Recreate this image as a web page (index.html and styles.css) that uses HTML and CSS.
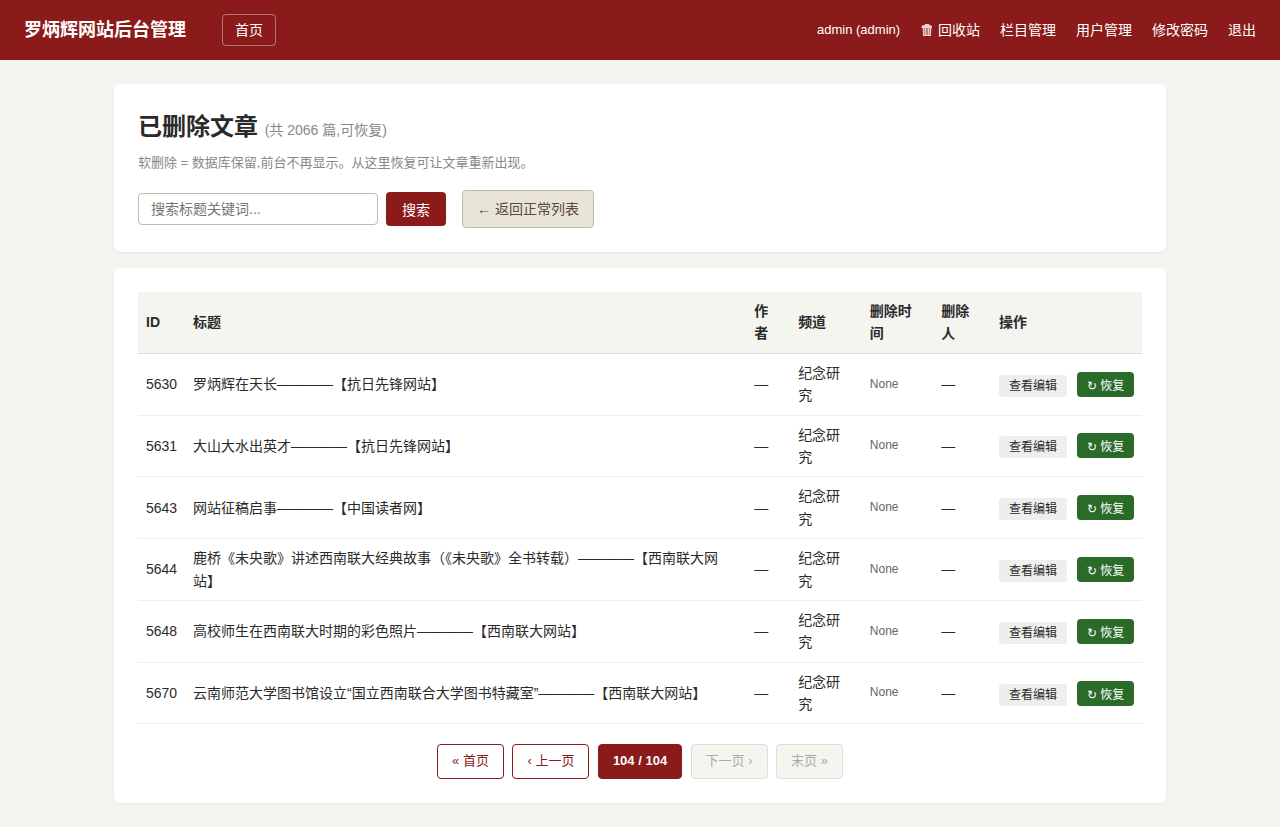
FILE: index.html
```html
<!DOCTYPE html>
<html lang="zh-CN">
<head>
<meta charset="utf-8">
<title>已删除文章</title>
<link rel="stylesheet" href="styles.css">
</head>
<body>
<header class="topbar">
  <div class="brand">罗炳辉网站后台管理</div>
  <a class="home">首页</a>
  <nav class="nav">
    <span class="user">admin (admin)</span>
    <a><svg class="trash" viewBox="0 0 14 14"><path d="M5 2V1h4v1h1.500l1.500 1.500V5H1.500V3.500L3 2z" fill="currentColor" opacity=".8"/><path d="M2.500 5h9L11 13H3z" fill="currentColor" opacity=".45"/><path d="M3.500 5v8M5.500 5v8M8.500 5v8M10.500 5v8M3 12.500h8" fill="none" stroke="currentColor" opacity=".6"/></svg> 回收站</a>
    <a>栏目管理</a>
    <a>用户管理</a>
    <a>修改密码</a>
    <a>退出</a>
  </nav>
</header>
<main class="container">
  <section class="card">
    <h1 class="title">已删除文章 <span class="count">(共 2066 篇,可恢复)</span></h1>
    <p class="hint">软删除 = 数据库保留,前台不再显示。从这里恢复可让文章重新出现。</p>
    <form class="search">
      <input class="field" type="text" placeholder="搜索标题关键词...">
      <button class="submit" type="button">搜索</button>
      <a class="back">← 返回正常列表</a>
    </form>
  </section>
  <section class="card">
    <table class="list">
      <colgroup>
        <col class="c-id"><col class="c-title"><col class="c-author"><col class="c-channel"><col class="c-time"><col class="c-by"><col class="c-ops">
      </colgroup>
      <thead>
        <tr><th>ID</th><th>标题</th><th class="narrow">作者</th><th>频道</th><th>删除时间</th><th class="narrow">删除人</th><th>操作</th></tr>
      </thead>
      <tbody>
        <tr><td>5630</td><td>罗炳辉在天长————【抗日先锋网站】</td><td>—</td><td class="narrow">纪念研究</td><td class="time">None</td><td>—</td><td class="ops"><a class="view">查看编辑</a> <button class="restore">↻ 恢复</button></td></tr>
        <tr><td>5631</td><td>大山大水出英才————【抗日先锋网站】</td><td>—</td><td class="narrow">纪念研究</td><td class="time">None</td><td>—</td><td class="ops"><a class="view">查看编辑</a> <button class="restore">↻ 恢复</button></td></tr>
        <tr><td>5643</td><td>网站征稿启事————【中国读者网】</td><td>—</td><td class="narrow">纪念研究</td><td class="time">None</td><td>—</td><td class="ops"><a class="view">查看编辑</a> <button class="restore">↻ 恢复</button></td></tr>
        <tr><td>5644</td><td>鹿桥《未央歌》讲述西南联大经典故事（《未央歌》全书转载）————【西南联大网站】</td><td>—</td><td class="narrow">纪念研究</td><td class="time">None</td><td>—</td><td class="ops"><a class="view">查看编辑</a> <button class="restore">↻ 恢复</button></td></tr>
        <tr><td>5648</td><td>高校师生在西南联大时期的彩色照片————【西南联大网站】</td><td>—</td><td class="narrow">纪念研究</td><td class="time">None</td><td>—</td><td class="ops"><a class="view">查看编辑</a> <button class="restore">↻ 恢复</button></td></tr>
        <tr><td>5670</td><td>云南师范大学图书馆设立“国立西南联合大学图书特藏室”————【西南联大网站】</td><td>—</td><td class="narrow">纪念研究</td><td class="time">None</td><td>—</td><td class="ops"><a class="view">查看编辑</a> <button class="restore">↻ 恢复</button></td></tr>
      </tbody>
    </table>
    <div class="pager">
      <a class="page">« 首页</a>
      <a class="page">‹ 上一页</a>
      <span class="page current">104 / 104</span>
      <span class="page disabled">下一页 ›</span>
      <span class="page disabled">末页 »</span>
    </div>
  </section>
</main>
</body>
</html>
```
FILE: styles.css
```css
* { box-sizing: border-box; }
body {
  margin: 0;
  background: #f5f5f0;
  color: #2a2a2a;
  font-family: "Liberation Sans", "Noto Sans CJK SC", sans-serif;
  font-size: 14px;
  line-height: 1.6;
}
.topbar {
  display: flex;
  align-items: center;
  height: 60px;
  padding: 0 24px;
  background: #8b1a1a;
  color: #fff;
}
.brand { font-size: 18px; font-weight: 700; }
.home {
  margin-left: 36px;
  padding: 4px 12px;
  border: 1px solid rgba(255, 255, 255, .4);
  border-radius: 4px;
}
.nav { display: flex; align-items: center; gap: 20px; margin-left: auto; }
.user { font-size: 13px; }
.trash { width: 14px; height: 14px; vertical-align: -2px; }
.container { max-width: 1100px; margin: 0 auto; padding: 24px 24px 8px; }
.card {
  margin-bottom: 16px;
  padding: 24px;
  border-radius: 6px;
  background: #fff;
  box-shadow: 0 1px 3px rgba(0, 0, 0, .06);
}
.title { margin: 0 0 6.8px; font-size: 24px; }
.count { color: #888; font-size: 14px; font-weight: 400; }
.hint { margin: 0 0 16px; color: #888; font-size: 13px; }
.search { display: flex; align-items: center; gap: 8px; }
.field {
  width: 240px;
  height: 32px;
  padding: 0 12px;
  border: 1px solid #c0b8a8;
  border-radius: 4px;
  font: inherit;
}
.submit {
  height: 34px;
  padding: 6px 16px;
  border: 0;
  border-radius: 4px;
  background: #8b1a1a;
  color: #fff;
  font-family: inherit;
  font-size: 14px;
}
.back {
  margin-left: 8px;
  padding: 7px 14px;
  border: 1px solid #c0b8a8;
  border-radius: 4px;
  background: #e8e4d8;
  color: #5a4a3a;
  line-height: 22px;
}
.list { width: 100%; border-collapse: collapse; table-layout: fixed; }
.c-id { width: 47px; }
.c-author { width: 43.8px; }
.c-channel { width: 71.7px; }
.c-time { width: 71.5px; }
.c-by { width: 57.7px; }
.c-ops { width: 151px; }
th, td { padding: 8px; text-align: left; border-bottom: 1px solid #eee; }
th { background: #f5f5f0; border-bottom-color: #ddd; }
.narrow { padding-right: 10px; }
.time { color: #666; font-size: 12px; }
.ops { white-space: nowrap; }
.view {
  padding: 4px 10px;
  border-radius: 3px;
  background: #eee;
  font-size: 12px;
}
.restore {
  margin: 0 0 0 6px;
  padding: 4px 10px;
  border: 0;
  border-radius: 4px;
  background: #2a6b2a;
  color: #fff;
  font-family: inherit;
  font-size: 12px;
}
.pager { display: flex; justify-content: center; gap: 8.5px; margin-top: 20px; font-size: 13px; }
.page {
  padding: 6px 14px;
  border: 1px solid #8b1a1a;
  border-radius: 4px;
  color: #8b1a1a;
}
.current { background: #8b1a1a; color: #fff; font-weight: 700; }
.disabled { background: #f5f5f0; border-color: #ddd; color: #aaa; }
```
